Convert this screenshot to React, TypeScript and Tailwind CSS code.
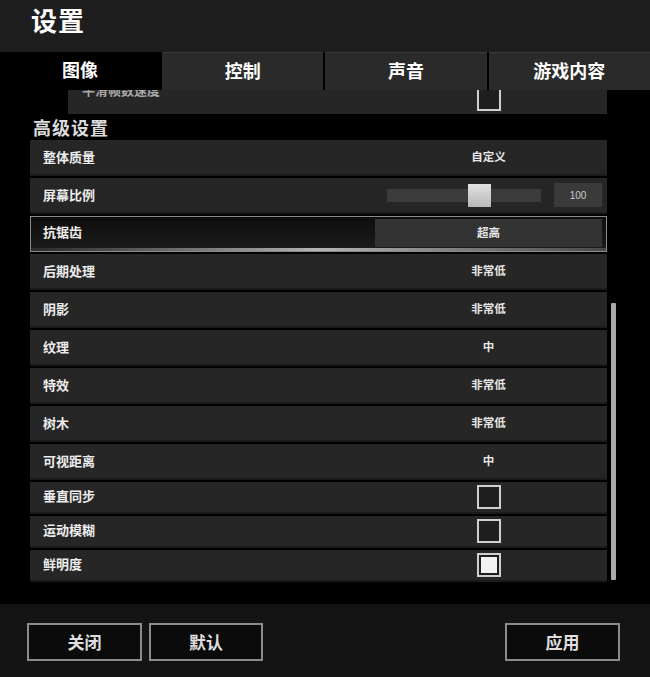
import React from 'react';

const rows = [
  { label: '整体质量', value: '自定义' },
  { label: '屏幕比例', slider: true },
  { label: '抗锯齿', value: '超高', focused: true },
  { label: '后期处理', value: '非常低' },
  { label: '阴影', value: '非常低' },
  { label: '纹理', value: '中' },
  { label: '特效', value: '非常低' },
  { label: '树木', value: '非常低' },
  { label: '可视距离', value: '中' },
];

const checks = [
  { label: '垂直同步', checked: false },
  { label: '运动模糊', checked: false },
  { label: '鲜明度', checked: true },
];

const tabs = ['图像', '控制', '声音', '游戏内容'];

const Checkbox: React.FC<{ checked: boolean }> = ({ checked }) => (
  <div className="w-[24px] h-[24px] border-2 border-[#cfcfcf] bg-[#1e1e1e] flex items-center justify-center">
    {checked && <div className="w-[16px] h-[16px] bg-[#f2f2f2]" />}
  </div>
);

const App: React.FC = () => {
  return (
    <div className="w-[650px] h-[677px] flex flex-col bg-black text-white font-['Noto_Sans_CJK_SC',sans-serif] overflow-hidden">
      {/* Header */}
      <div className="h-[52px] shrink-0 bg-[#1e1e1e] flex items-center pl-[31px] pb-[12px]">
        <h1 className="text-[26px] font-bold leading-none tracking-[1px]">设置</h1>
      </div>

      {/* Tabs */}
      <div className="h-[38px] shrink-0 flex gap-[2px] bg-black">
        {tabs.map((t, i) => (
          <div
            key={t}
            className={`flex items-center justify-center pb-[3px] text-[18px] font-bold ${
              i === 0 ? 'w-[160px] bg-black' : 'flex-1 bg-[#2a2a2a] border-t border-[#3a3a3a]'
            }`}
          >
            {t}
          </div>
        ))}
      </div>

      {/* Content */}
      <div className="flex-1 flex overflow-hidden">
        <div className="w-[607px] shrink-0 flex flex-col">
          {/* partially scrolled row */}
          <div className="ml-[68px] mt-[-12px] h-[36px] bg-[#262626] flex items-center shrink-0">
            <span className="w-[307px] pl-[14px] pb-[13px] text-[13px] font-bold text-[#a8a8a8]">平滑帧数速度</span>
            <div className="flex-1 flex justify-center pt-[6px] pr-[4px]">
              <Checkbox checked={false} />
            </div>
          </div>

          <div className="h-[26px] shrink-0 pl-[33px] pb-[2px] flex items-end text-[18px] leading-[22px] font-bold text-[#dcdcdc] tracking-[1px]">
            高级设置
          </div>

          <div className="pl-[30px] flex flex-col gap-[2px]">
            {rows.map((r) =>
              r.focused ? (
                <div key={r.label} className="h-[36px] border border-[#8a8a8a] flex flex-col bg-gradient-to-b from-[#0e0e0e] to-[#1c1c1c]">
                  <div className="flex-1 flex items-center pt-[1px]">
                    <span className="w-[344px] pl-[12px] pb-[2px] text-[13px] font-bold text-[#ececec]">{r.label}</span>
                    <div className="w-[227px] h-[28px] bg-[#333333] flex items-center justify-center text-[11.5px] font-bold text-[#e6e6e6]">
                      {r.value}
                    </div>
                  </div>
                  <div className="h-[3px] bg-gradient-to-r from-[#2a2a2a] via-[#b5b5b5] to-[#4a4a4a]" />
                </div>
              ) : (
                <div key={r.label} className="h-[36px] bg-[#262626] border-b-2 border-[#1b1b1b] flex items-center pr-[5px]">
                  <span className="w-[345px] pl-[13px] text-[13px] font-bold text-[#ececec]">{r.label}</span>
                  {r.slider ? (
                    <div className="flex-1 flex items-center pl-[12px]">
                      <div className="relative w-[154px] h-[13px] bg-[#3c3c3c]">
                        <div className="absolute left-[81px] top-[-5px] w-[23px] h-[23px] bg-gradient-to-b from-[#e2e2e2] to-[#b8b8b8]" />
                      </div>
                      <div className="ml-[13px] w-[48px] h-[24px] bg-[#3a3a3a] flex items-center justify-center text-[10px] text-[#cccccc] font-['Liberation_Sans',sans-serif]">
                        100
                      </div>
                    </div>
                  ) : (
                    <div className="flex-1 text-center text-[11.5px] font-bold text-[#e6e6e6]">{r.value}</div>
                  )}
                </div>
              )
            )}
            {checks.map((c) => (
              <div key={c.label} className="h-[32px] bg-[#262626] border-b-2 border-[#1b1b1b] flex items-center pr-[5px]">
                <span className="w-[345px] pl-[13px] pb-[2px] text-[13px] font-bold text-[#ececec]">{c.label}</span>
                <div className="flex-1 flex justify-center">
                  <Checkbox checked={c.checked} />
                </div>
              </div>
            ))}
          </div>
        </div>

        {/* Scrollbar */}
        <div className="ml-[4px] w-[5px] pt-[213px]">
          <div className="h-[277px] bg-[#a9a9a9] rounded-[1px]" />
        </div>
      </div>

      {/* Footer */}
      <div className="h-[73px] shrink-0 bg-[#141414] flex items-start pt-[19px] pl-[27px] pr-[30px]">
        <button className="w-[115px] h-[38px] border-2 border-[#8c8c8c] bg-[#0b0b0b] text-[17px] font-bold text-[#dedede]">关闭</button>
        <button className="ml-[7px] w-[114px] h-[38px] border-2 border-[#8c8c8c] bg-[#0b0b0b] text-[17px] font-bold text-[#dedede]">默认</button>
        <button className="ml-auto w-[115px] h-[38px] border-2 border-[#8c8c8c] bg-[#0b0b0b] text-[17px] font-bold text-[#dedede]">应用</button>
      </div>
    </div>
  );
};

export default App;
